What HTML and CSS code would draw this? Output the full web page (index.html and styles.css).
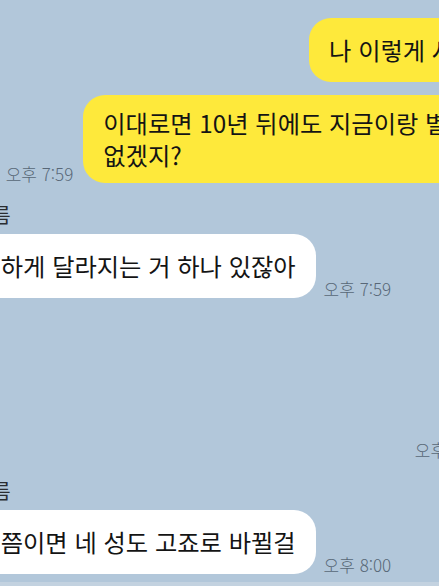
FILE: index.html
```html
<!DOCTYPE html>
<html lang="ko">
<head>
<meta charset="utf-8">
<title>채팅</title>
<link rel="stylesheet" href="styles.css">
</head>
<body>
<div class="screen">
  <div class="chat">
    <div class="row out">
      <div class="bubble mine"><span>나 이렇게 사는 거 맞아</span></div>
    </div>
    <div class="row out">
      <span class="time">오후 7:59</span>
      <div class="bubble mine"><span>이대로면 10년 뒤에도 지금이랑 별 차이 날 게<br>없겠지?</span></div>
    </div>
    <div class="group">
      <div class="sender">다정한 여름</div>
      <div class="row">
        <div class="bubble theirs"><span>너 확실하게 달라지는 거 하나 있잖아</span></div>
        <span class="time">오후 7:59</span>
      </div>
    </div>
    <div class="row out">
      <div class="bubble mine"><span>응</span></div>
    </div>
    <div class="row out">
      <span class="time">오후 8:00</span>
      <div class="bubble mine"><span>ㅋㅋ</span></div>
    </div>
    <div class="group">
      <div class="sender">다정한 여름</div>
      <div class="row">
        <div class="bubble theirs"><span>그맘때 쯤이면 네 성도 고죠로 바뀔걸</span></div>
        <span class="time">오후 8:00</span>
      </div>
    </div>
  </div>
  <div class="footer"></div>
</div>
</body>
</html>
```

FILE: styles.css
```css
html, body {
  margin: 0;
  padding: 0;
}

.screen {
  width: 439px;
  height: 586px;
  overflow: hidden;
  background: #b2c7da;
  font-family: "Noto Sans CJK KR", "Noto Sans", sans-serif;
  display: flex;
  flex-direction: column;
}

.chat {
  flex: 1;
  width: 670px;
  margin-left: -93px;
  padding-top: 18px;
  box-sizing: border-box;
  display: flex;
  flex-direction: column;
}

.row {
  display: flex;
  align-items: flex-end;
  gap: 8px;
}

.out {
  justify-content: flex-end;
  gap: 10px;
}

.row.out + .row.out {
  margin-top: 13px;
}

.group + .row.out {
  margin-top: 20px;
}

.row.out + .group {
  margin-top: 20px;
}

.bubble {
  font-size: 24.25px;
  line-height: 32px;
  color: #141414;
  padding: 12px 20px;
  min-height: 64px;
  box-sizing: border-box;
  border-radius: 22px;
  display: flex;
  align-items: center;
  white-space: nowrap;
}

.mine {
  background: #fee93b;
}

.theirs {
  background: #ffffff;
}

.time {
  font-size: 17px;
  line-height: 18px;
  font-weight: 300;
  color: #586777;
  white-space: nowrap;
  flex-shrink: 0;
}

.sender {
  font-size: 20px;
  line-height: 24px;
  color: #2a2d31;
  margin-bottom: 7px;
  margin-left: 6px;
}

.footer {
  height: 4px;
  background: #c3d2e0;
}
```
